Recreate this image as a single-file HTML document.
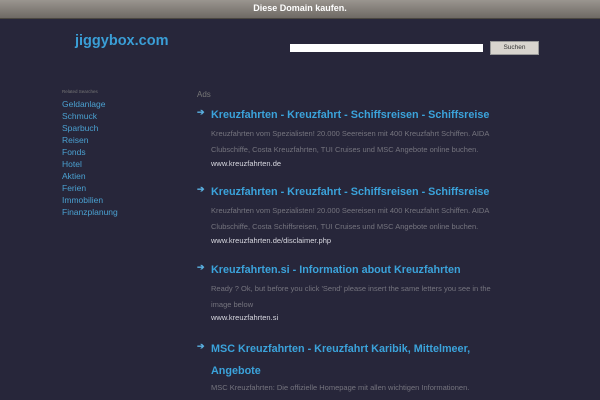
<!DOCTYPE html>
<html><head><style>
*{margin:0;padding:0}
body{width:600px;height:400px;overflow:hidden;background:#27263a;font-family:"Liberation Sans",sans-serif;position:relative}
.top{position:absolute;left:0;top:0;width:600px;height:18px;background:linear-gradient(#9a958f,#6e6964);border-bottom:1px solid #4a4640;color:#fff;font-size:9px;font-weight:bold;text-align:center;line-height:17px}
.a{position:absolute;white-space:nowrap}
.logo{left:75px;top:33px;font-size:14.5px;font-weight:bold;color:#3a9ed6}
.inp{left:290px;top:44px;width:193px;height:8px;background:#fff}
.btn{left:490px;top:41px;width:49px;height:14px;background:#d8d4ce;border:1px solid #999;box-sizing:border-box;font-size:6.5px;color:#333;text-align:center;line-height:12px}
.rs{left:62px;top:89px;font-size:4.5px;color:#777}
.side{left:62px;top:98px;font-size:8.5px;color:#4aa0d0;line-height:12px}
.ads{left:197px;top:90px;font-size:8px;color:#777}
.t{left:211px;font-size:10.8px;font-weight:bold;color:#3ba3db}
.ar{left:197px;font-size:9px;color:#5ab0e0;font-weight:bold}
.d{left:211px;font-size:7.5px;color:#75747e;line-height:15.5px}
.u{left:211px;font-size:7.5px;color:#d8d8e0}
</style></head><body>
<div class="top">Diese Domain kaufen.</div>
<div class="a logo">jiggybox.com</div>
<div class="a inp"></div>
<div class="a btn">Suchen</div>
<div class="a rs">Related Searches</div>
<div class="a side">Geldanlage<br>Schmuck<br>Sparbuch<br>Reisen<br>Fonds<br>Hotel<br>Aktien<br>Ferien<br>Immobilien<br>Finanzplanung</div>
<div class="a ads">Ads</div>

<div class="a ar" style="top:107px">➔</div>
<div class="a t" style="top:109px">Kreuzfahrten - Kreuzfahrt - Schiffsreisen - Schiffsreise</div>
<div class="a d" style="top:126px">Kreuzfahrten vom Spezialisten! 20.000 Seereisen mit 400 Kreuzfahrt Schiffen. AIDA<br>Clubschiffe, Costa Kreuzfahrten, TUI Cruises und MSC Angebote online buchen.</div>
<div class="a u" style="top:159px">www.kreuzfahrten.de</div>

<div class="a ar" style="top:184px">➔</div>
<div class="a t" style="top:186px">Kreuzfahrten - Kreuzfahrt - Schiffsreisen - Schiffsreise</div>
<div class="a d" style="top:203px">Kreuzfahrten vom Spezialisten! 20.000 Seereisen mit 400 Kreuzfahrt Schiffen. AIDA<br>Clubschiffe, Costa Schiffsreisen, TUI Cruises und MSC Angebote online buchen.</div>
<div class="a u" style="top:236px">www.kreuzfahrten.de/disclaimer.php</div>

<div class="a ar" style="top:262px">➔</div>
<div class="a t" style="top:264px">Kreuzfahrten.si - Information about Kreuzfahrten</div>
<div class="a d" style="top:281px">Ready ? Ok, but before you click 'Send' please insert the same letters you see in the<br>image below</div>
<div class="a u" style="top:313px">www.kreuzfahrten.si</div>

<div class="a ar" style="top:341px">➔</div>
<div class="a t" style="top:338px;line-height:22px">MSC Kreuzfahrten - Kreuzfahrt Karibik, Mittelmeer,<br>Angebote</div>
<div class="a d" style="top:380px">MSC Kreuzfahrten: Die offizielle Homepage mit allen wichtigen Informationen.</div>
</body></html>
